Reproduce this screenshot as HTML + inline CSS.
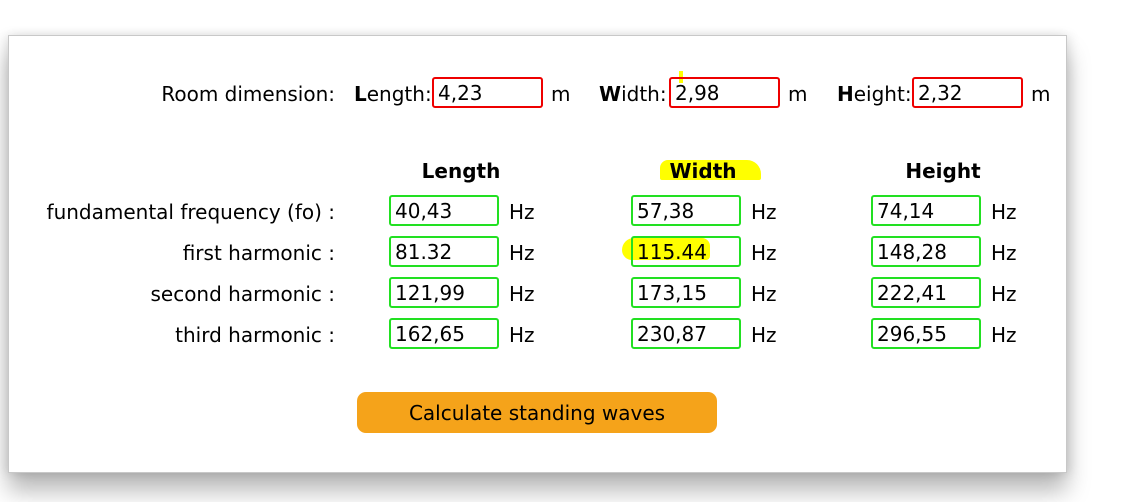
<!DOCTYPE html>
<html><head><meta charset="utf-8"><style>
html,body{margin:0;padding:0;background:#fff;width:1121px;height:502px;overflow:hidden;position:relative;font-family:"DejaVu Sans","Liberation Sans",sans-serif;font-size:20px;color:#000}
.panel{position:absolute;left:8px;top:35px;width:1057px;height:436px;border:1px solid #c8c8c8;background:#fff;box-shadow:0 18px 22px rgba(0,0,0,0.28),-4px 0 10px rgba(0,0,0,0.08),4px 0 10px rgba(0,0,0,0.08)}
.a{position:absolute;line-height:34px;white-space:nowrap}
.r{text-align:right}
.box{position:absolute;box-sizing:border-box;height:31px;border:2.5px solid #e00;border-radius:3px;padding-left:4px;line-height:29px}
.g{border-color:#22e022;width:110px}
.red{width:111px}
.hl{position:absolute;background:#ffff00}
b{font-weight:bold}
.btn{position:absolute;left:357px;top:392px;width:360px;height:41px;background:#f5a31a;border-radius:9px;text-align:center;line-height:43px;font-size:20px}
</style></head><body>
<div class="panel"></div>
<div class="hl" style="left:679px;top:71px;width:4px;height:12px"></div>
<div class="hl" style="left:660px;top:160px;width:101px;height:20px;border-radius:8px 14px 2px 2px"></div>
<div class="hl" style="left:622px;top:238px;width:88px;height:22px;border-radius:12px 8px 4px 10px"></div>

<div class="a r" style="left:0;width:335px;top:77px">Room dimension:</div>
<div class="a" style="left:354px;top:77px"><b>L</b>ength:</div>
<div class="box red" style="left:432px;top:77px">4,23</div>
<div class="a" style="left:551px;top:77px">m</div>
<div class="a" style="left:599px;top:77px"><b>W</b>idth:</div>
<div class="box red" style="left:669px;top:77px">2,98</div>
<div class="a" style="left:788px;top:77px">m</div>
<div class="a" style="left:837px;top:77px"><b>H</b>eight:</div>
<div class="box red" style="left:912px;top:77px">2,32</div>
<div class="a" style="left:1031px;top:77px">m</div>

<div class="a" style="left:361px;width:200px;text-align:center;top:154px;font-weight:bold">Length</div>
<div class="a" style="left:603px;width:200px;text-align:center;top:154px;font-weight:bold">Width</div>
<div class="a" style="left:843px;width:200px;text-align:center;top:154px;font-weight:bold">Height</div>

<div class="a r" style="left:0;width:335px;top:195px">fundamental frequency (fo) :</div>
<div class="a r" style="left:0;width:335px;top:236px">first harmonic :</div>
<div class="a r" style="left:0;width:335px;top:277px">second harmonic :</div>
<div class="a r" style="left:0;width:335px;top:318px">third harmonic :</div>

<div class="box g" style="left:389px;top:195px">40,43</div><div class="a" style="left:509px;top:195px">Hz</div>
<div class="box g" style="left:631px;top:195px">57,38</div><div class="a" style="left:751px;top:195px">Hz</div>
<div class="box g" style="left:871px;top:195px">74,14</div><div class="a" style="left:991px;top:195px">Hz</div>

<div class="box g" style="left:389px;top:236px">81.32</div><div class="a" style="left:509px;top:236px">Hz</div>
<div class="box g" style="left:631px;top:236px">115.44</div><div class="a" style="left:751px;top:236px">Hz</div>
<div class="box g" style="left:871px;top:236px">148,28</div><div class="a" style="left:991px;top:236px">Hz</div>

<div class="box g" style="left:389px;top:277px">121,99</div><div class="a" style="left:509px;top:277px">Hz</div>
<div class="box g" style="left:631px;top:277px">173,15</div><div class="a" style="left:751px;top:277px">Hz</div>
<div class="box g" style="left:871px;top:277px">222,41</div><div class="a" style="left:991px;top:277px">Hz</div>

<div class="box g" style="left:389px;top:318px">162,65</div><div class="a" style="left:509px;top:318px">Hz</div>
<div class="box g" style="left:631px;top:318px">230,87</div><div class="a" style="left:751px;top:318px">Hz</div>
<div class="box g" style="left:871px;top:318px">296,55</div><div class="a" style="left:991px;top:318px">Hz</div>

<div class="btn">Calculate standing waves</div>
</body></html>
